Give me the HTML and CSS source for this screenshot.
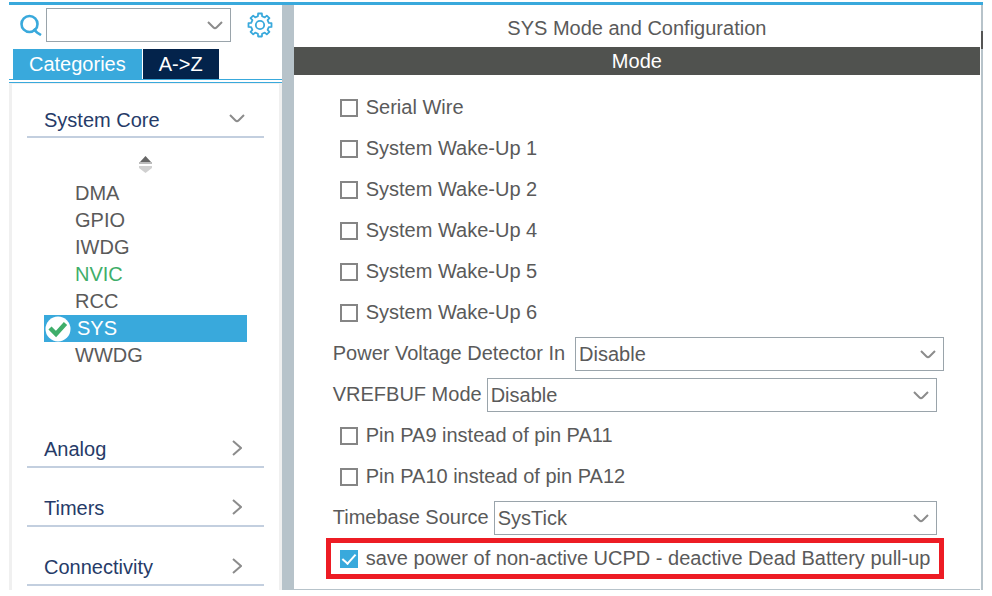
FILE: index.html
```html
<!DOCTYPE html>
<html lang="en">
<head>
  <meta charset="UTF-8" />
  <meta name="viewport" content="width=device-width, initial-scale=1.0"/>
  <title>SYS Mode and Configuration</title>
  <link rel="stylesheet" href="styles.css">
</head>
<body>
  <svg class="sprite" aria-hidden="true">
    <symbol id="down" viewBox="0 0 16 9"><path d="M1 1 L6.5 6.5 Q8 8 9.5 6.5 L15 1" fill="none" stroke="#8c8c8c" stroke-width="2"/></symbol>
    <symbol id="right" viewBox="0 0 10 16"><path d="M1 1 L9 8 L1 15" fill="none" stroke="#8c8c8c" stroke-width="2"/></symbol>
  </svg>

  <div class="window">
    <aside class="sidebar">
      <div class="search-bar">
        <svg class="search-icon" viewBox="0 0 22 22">
          <circle cx="9.5" cy="10" r="8" fill="none" stroke="#39a9dc" stroke-width="2.6"/>
          <path d="M13.5 15 L17 18.5 L21 21" fill="none" stroke="#39a9dc" stroke-width="2.6"/>
        </svg>
        <div class="combo search-combo">
          <input type="text" class="search-input" aria-label="Search">
          <svg class="chevron"><use href="#down"/></svg>
        </div>
        <button class="gear-btn" aria-label="Settings">
          <svg class="gear" viewBox="-13 -13 26 26" fill="none" stroke="#39a9dc" stroke-width="1.8" stroke-linejoin="round">
            <circle r="4.2"/>
            <path d="M-2.1 -8.8 L-1.9 -11.5 L1.9 -11.5 L2.1 -8.8 L4.8 -7.6 L6.8 -9.4 L9.4 -6.8 L7.6 -4.8 L8.8 -2.1 L11.5 -1.9 L11.5 1.9 L8.8 2.1 L7.6 4.8 L9.4 6.8 L6.8 9.4 L4.8 7.6 L2.1 8.8 L1.9 11.5 L-1.9 11.5 L-2.1 8.8 L-4.8 7.6 L-6.8 9.4 L-9.4 6.8 L-7.6 4.8 L-8.8 2.1 L-11.5 1.9 L-11.5 -1.9 L-8.8 -2.1 L-7.6 -4.8 L-9.4 -6.8 L-6.8 -9.4 L-4.8 -7.6 Z"/>
          </svg>
        </button>
      </div>

      <div class="tabs">
        <button class="tab active">Categories</button>
        <button class="tab">A-&gt;Z</button>
      </div>

      <nav class="tree">
        <button class="category">System Core <svg class="chevron"><use href="#down"/></svg></button>
        <div class="group">
          <svg class="sorter" viewBox="0 0 13 17">
            <path d="M6.5 0 L12 6 H1 Z" fill="#666"/>
            <path d="M0 6 H13 V8 H0 Z" fill="#bbb"/>
            <path d="M0 10 H13 V12 L6.5 17 L0 12 Z" fill="#d0d0d0"/>
          </svg>
          <ul class="items">
            <li><a href="#" class="item">DMA</a></li>
            <li><a href="#" class="item">GPIO</a></li>
            <li><a href="#" class="item">IWDG</a></li>
            <li><a href="#" class="item enabled">NVIC</a></li>
            <li><a href="#" class="item">RCC</a></li>
            <li>
              <a href="#" class="item selected">
                <svg class="ok" viewBox="0 0 26 26">
                  <circle cx="13" cy="13" r="12.5" fill="#fff"/>
                  <path d="M5 12 L11 18 L20.5 7.5" fill="none" stroke="#3fae6a" stroke-width="4.4"/>
                </svg>
                SYS
              </a>
            </li>
            <li><a href="#" class="item">WWDG</a></li>
          </ul>
        </div>
        <button class="category">Analog <svg class="chevron-right"><use href="#right"/></svg></button>
        <button class="category">Timers <svg class="chevron-right"><use href="#right"/></svg></button>
        <button class="category">Connectivity <svg class="chevron-right"><use href="#right"/></svg></button>
      </nav>
    </aside>

    <div class="splitter"></div>

    <main class="config">
      <h1>SYS Mode and Configuration</h1>
      <h2>Mode</h2>
      <form class="mode-form">
        <label class="row check"><input type="checkbox">Serial Wire</label>
        <label class="row check"><input type="checkbox">System Wake-Up 1</label>
        <label class="row check"><input type="checkbox">System Wake-Up 2</label>
        <label class="row check"><input type="checkbox">System Wake-Up 4</label>
        <label class="row check"><input type="checkbox">System Wake-Up 5</label>
        <label class="row check"><input type="checkbox">System Wake-Up 6</label>
        <div class="row wide">
          <label for="pvd">Power Voltage Detector In</label>
          <div class="combo">
            <select id="pvd"><option>Disable</option></select>
            <svg class="chevron"><use href="#down"/></svg>
          </div>
        </div>
        <div class="row">
          <label for="vrefbuf">VREFBUF Mode</label>
          <div class="combo">
            <select id="vrefbuf"><option>Disable</option></select>
            <svg class="chevron"><use href="#down"/></svg>
          </div>
        </div>
        <label class="row check"><input type="checkbox">Pin PA9 instead of pin PA11</label>
        <label class="row check"><input type="checkbox">Pin PA10 instead of pin PA12</label>
        <div class="row">
          <label for="timebase">Timebase Source</label>
          <div class="combo">
            <select id="timebase"><option>SysTick</option></select>
            <svg class="chevron"><use href="#down"/></svg>
          </div>
        </div>
        <label class="row check highlight"><input type="checkbox" checked>save power of non-active UCPD - deactive Dead Battery pull-up</label>
      </form>
    </main>

    <div class="scroll-edge"></div>
  </div>
</body>
</html>
```

FILE: styles.css
```css
* {
  box-sizing: border-box;
}

body {
  margin: 0;
  padding: 2px 9px 6px;
  background-color: #fff;
  color: #5a5a5a;
  font-family: "Liberation Sans", Arial, sans-serif;
  font-size: 20px;
}

button, input, select {
  font: inherit;
  color: inherit;
  border: none;
  background: none;
  padding: 0;
  margin: 0;
}

svg {
  display: block;
  flex-shrink: 0;
}

.sprite {
  position: absolute;
  width: 0;
  height: 0;
}

.window {
  display: flex;
  border-top: 3px solid #39a9dc;
}

/* left panel */
.sidebar {
  width: 28%;
  max-width: 273px;
  flex-shrink: 0;
  display: flex;
  flex-direction: column;
}

.search-bar {
  display: flex;
  align-items: center;
  padding: 3px 9px 7px 11px;
}

.search-icon {
  width: 22px;
  height: 22px;
  margin-right: 4px;
}

.combo {
  position: relative;
  flex: 1;
  height: 34px;
  border: 1px solid #9aa4ab;
  background-color: #fff;
}

.combo .chevron {
  position: absolute;
  right: 7px;
  top: 12px;
  pointer-events: none;
}

.combo select, .search-input {
  appearance: none;
  width: 100%;
  height: 100%;
  padding: 0 28px 0 3px;
}

.chevron {
  width: 16px;
  height: 9px;
}

.chevron-right {
  width: 10px;
  height: 16px;
  margin-right: 3px;
}

.category svg {
  margin-bottom: 4px;
}

.gear-btn {
  margin-left: 16px;
}

.gear {
  width: 26px;
  height: 26px;
}

.tabs {
  display: flex;
  gap: 1px;
  padding-left: 4px;
  border-bottom: 4px double #39a9dc;
}

.tab {
  height: 30px;
  padding: 0 16px;
  background-color: #03234b;
  color: #fff;
}

.tab.active {
  background-color: #39a9dc;
}

.tree {
  flex: 1;
  padding: 0 15px;
  border: solid #f0f0f0;
  border-width: 1px 3px 0;
}

.category {
  display: flex;
  justify-content: space-between;
  align-items: center;
  width: 100%;
  height: 59px;
  padding: 24px 19px 0 17px;
  border-bottom: 2px solid #c3cfdf;
  color: #263b68;
}

.category:first-child {
  height: 54px;
  padding-top: 20px;
}

.group {
  padding: 18px 17px 40px;
}

.sorter {
  width: 13px;
  height: 17px;
  margin: 0 auto 7px;
}

.items {
  list-style: none;
  margin: 0;
  padding: 0;
}

.item {
  display: flex;
  align-items: center;
  height: 27px;
  padding-left: 31px;
  color: #5a5a5a;
  text-decoration: none;
}

.item.enabled {
  color: #3fae6a;
}

.item.selected {
  gap: 6px;
  padding-left: 1px;
  background-color: #39a9dc;
  color: #fff;
}

.ok {
  width: 26px;
  height: 26px;
}

.splitter {
  width: 12px;
  flex-shrink: 0;
  background-color: #b7c3ca;
}

/* right panel */
.config {
  flex: 1;
  min-width: 0;
  border-bottom: 1px solid #b7c3ca;
}

h1, h2 {
  margin: 0;
  font-size: 20px;
  font-weight: normal;
  text-align: center;
}

h1 {
  padding-top: 4px;
  line-height: 38px;
}

h2 {
  background-color: #50524f;
  color: #fff;
  line-height: 28px;
}

.mode-form {
  padding: 12px 36px 10px 32px;
}

.row {
  display: flex;
  align-items: center;
  gap: 5px;
  height: 41px;
  padding: 0 7px;
  white-space: nowrap;
}

.row.wide {
  gap: 10px;
  padding-right: 0;
}

.row.check {
  gap: 8px;
  padding-left: 14px;
}

.row.highlight {
  padding-left: 9px;
  border: 5px solid #ed1c24;
}

.check input {
  appearance: none;
  display: grid;
  place-items: center;
  width: 18px;
  height: 18px;
  flex-shrink: 0;
  border: 2px solid #858585;
}

.check input:checked {
  border: none;
  background-color: #39a9dc;
}

.check input:checked::after {
  content: "";
  width: 6px;
  height: 11px;
  margin-bottom: 3px;
  border: solid #fff;
  border-width: 0 2px 2px 0;
  transform: rotate(42deg);
}

.scroll-edge {
  width: 2px;
  margin-left: 1px;
  background: linear-gradient(#b7c3ca 26px, #555 26px, #555 44px, #b7c3ca 44px);
}
```
